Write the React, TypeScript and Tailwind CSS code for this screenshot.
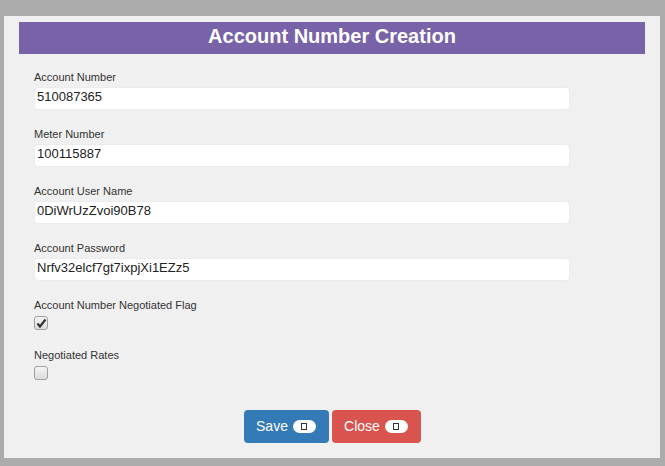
import React from 'react';

const fields = [
  { label: 'Account Number', value: '510087365' },
  { label: 'Meter Number', value: '100115887' },
  { label: 'Account User Name', value: '0DiWrUzZvoi90B78' },
  { label: 'Account Password', value: 'Nrfv32elcf7gt7ixpjXi1EZz5' },
];

function Badge() {
  return (
    <span className="ml-[5px] inline-flex h-[13px] w-[23px] items-center justify-center rounded-full bg-white">
      <span className="block h-[7px] w-[6px] border border-[#333]" />
    </span>
  );
}

function Checkbox({ checked }: { checked?: boolean }) {
  return (
    <div className="mt-[4px] flex h-[14px] w-[14px] items-center justify-center rounded-[3px] border border-[#a0a0a0] bg-gradient-to-b from-[#f4f4f4] to-[#dcdcdc]">
      {checked && (
        <svg width="11" height="10" viewBox="0 0 11 10">
          <path d="M1.5 5.5 L4 8.5 L9.5 1.5" fill="none" stroke="#333" strokeWidth="2.2" />
        </svg>
      )}
    </div>
  );
}

export default function App() {
  return (
    <div className="h-[466px] w-[665px] bg-[#acacac] pl-[4px] pt-[16px] font-['Liberation_Sans',Arial,sans-serif]">
      <div className="h-[442px] w-[656px] bg-[#f0f0f0] pt-[6px]">
        <div className="mx-[15px] flex h-[32px] items-center justify-center bg-[#7862a8] pb-[5px] text-[20px] font-bold text-white">
          Account Number Creation
        </div>
        <div className="px-[30px] pt-[16px]">
          {fields.map((f) => (
            <div key={f.label} className="mb-[17px]">
              <div className="text-[11px] leading-[14px] text-[#333]">{f.label}</div>
              <div className="mt-[3px] flex h-[23px] w-[536px] items-center rounded-[4px] border border-[#ececec] bg-white pb-[3px] pl-[2px] text-[13px] text-[#222]">
                {f.value}
              </div>
            </div>
          ))}
          <div className="text-[11px] leading-[14px] text-[#333]">Account Number Negotiated Flag</div>
          <Checkbox checked />
          <div className="mt-[18px] text-[11px] leading-[14px] text-[#333]">Negotiated Rates</div>
          <Checkbox />
          <div className="mt-[30px] flex justify-center gap-[3px]">
            <button className="flex h-[33px] w-[85px] items-center justify-center rounded-[4px] bg-[#337ab7] text-[14px] text-white">
              Save
              <Badge />
            </button>
            <button className="flex h-[33px] w-[89px] items-center justify-center rounded-[4px] bg-[#d9534f] text-[14px] text-white">
              Close
              <Badge />
            </button>
          </div>
        </div>
      </div>
    </div>
  );
}
